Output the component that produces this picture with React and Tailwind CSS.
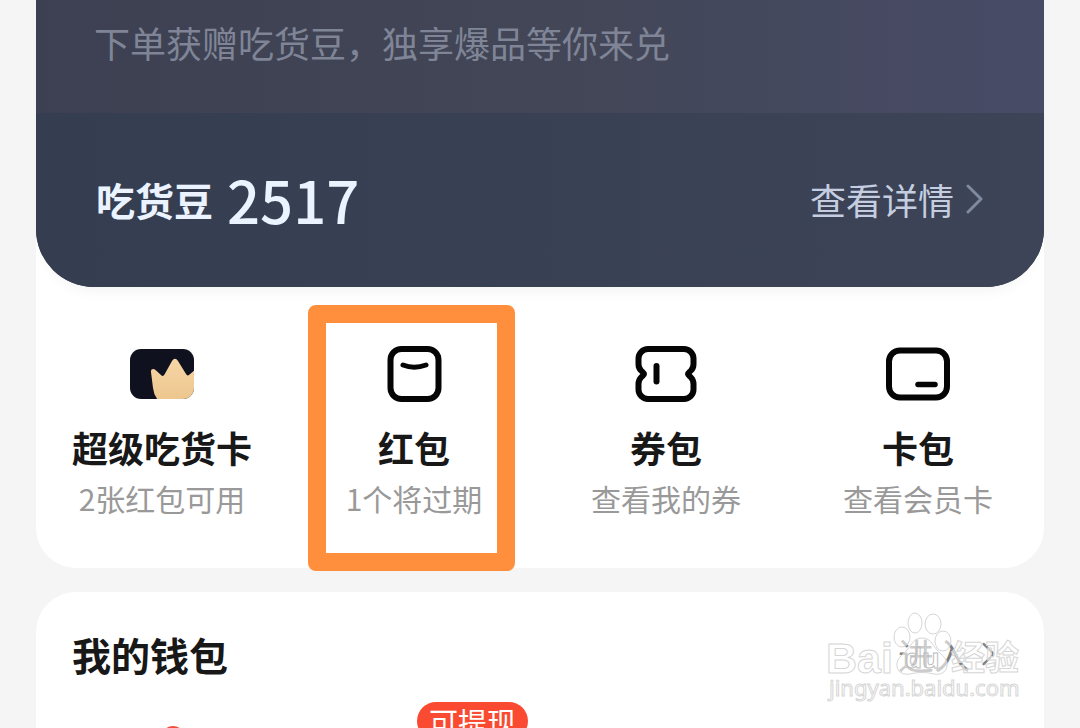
import React from 'react';
import clsx from 'clsx';

const CardIcon = () => (
  <svg width="64" height="56" viewBox="0 0 64 56" aria-hidden="true">
    <defs>
      <linearGradient id="crown" x1="0" y1="0" x2="0" y2="1">
        <stop offset="0" stopColor="#f6d6a6" />
        <stop offset="1" stopColor="#ecc58c" />
      </linearGradient>
      <clipPath id="cardShape">
        <rect y="3" width="64" height="50" rx="11" />
      </clipPath>
    </defs>
    <g clipPath="url(#cardShape)">
      <rect y="3" width="64" height="50" fill="#10111f" />
      <path
        d="M21 26C20.500 23 23.500 22 25.500 24L31 29Q33 31 34.500 28.500L42 15Q45 10.500 48 15L56 28Q57.500 30.500 59.500 28.500L66 23V56H30Q24 51 23 42Z"
        fill="url(#crown)"
      />
    </g>
  </svg>
);

const RedPacketIcon = () => (
  <svg width="64" height="56" viewBox="0 0 64 56" fill="none" stroke="#050505" aria-hidden="true">
    <rect x="8.500" y="3" width="48" height="50" rx="11" strokeWidth="6" />
    <path d="M21 19q11 4.500 23 0" strokeWidth="5" strokeLinecap="round" />
  </svg>
);

const CouponIcon = () => (
  <svg width="64" height="56" viewBox="0 0 64 56" fill="none" stroke="#050505" strokeLinecap="round" strokeLinejoin="round" aria-hidden="true">
    <path
      d="M14 3h36a9.500 9.500 0 0 1 9.500 9.500V18c0 3-.5 4.500-2.500 6.500-1.500 1.500-3 2.200-3 3.500s1.500 2 3 3.500c2 2 2.500 3.500 2.500 6.500v5.500a9.500 9.500 0 0 1-9.500 9.500H14a9.500 9.500 0 0 1-9.500-9.500V38c0-3 .5-4.500 2.500-6.500 1.500-1.500 3-2.200 3-3.500s-1.500-2-3-3.500c-2-2-2.500-3.500-2.500-6.500v-5.500A9.500 9.500 0 0 1 14 3z"
      strokeWidth="6"
    />
    <path d="M22.500 20v15.500" strokeWidth="6" />
  </svg>
);

const WalletIcon = () => (
  <svg width="64" height="56" viewBox="0 0 64 56" fill="none" stroke="#050505" aria-hidden="true">
    <rect x="3" y="4.500" width="58" height="47" rx="11" strokeWidth="6" />
    <path d="M32 38.500h17" strokeWidth="5.500" strokeLinecap="round" />
  </svg>
);

const Chevron = ({ className }) => (
  <svg viewBox="0 0 18 30" fill="none" className={className} aria-hidden="true">
    <path d="M2 2l13 13L2 28" stroke="currentColor" strokeWidth="3" strokeLinecap="round" strokeLinejoin="round" />
  </svg>
);

const Watermark = () => (
  <svg
    width="210"
    height="104"
    viewBox="0 0 210 104"
    className="absolute top-3 right-3.5 pointer-events-none"
    fill="#ffffff"
    fillOpacity="0.6"
    stroke="#d6d6d6"
    strokeWidth="1"
    fontFamily="'Noto Sans', 'Noto Sans CJK SC', sans-serif"
  >
    <text x="6" y="69" fontSize="43" fontWeight="700" fontFamily="'Liberation Sans', sans-serif">Bai</text>
    <path d="M102 34c8 0 10 6 15 12 5 5 11 9 10 16-1 7-7 9-13 8-8-2-16-2-24 0-6 1-12-1-13-8-1-7 5-11 10-16 5-6 7-12 15-12z" />
    <ellipse cx="82" cy="33" rx="8" ry="10" />
    <ellipse cx="95" cy="19" rx="7" ry="10" />
    <ellipse cx="113" cy="20" rx="8" ry="10" />
    <ellipse cx="123" cy="37" rx="8" ry="10" />
    <text x="85" y="64" fontSize="27" fontWeight="700" fill="none" stroke="#bdbdbd">du</text>
    <text x="131" y="66" fontSize="34" fontWeight="700">经验</text>
    <text x="9" y="92" fontSize="22">jingyan.baidu.com</text>
  </svg>
);

const entries = [
  { title: '超级吃货卡', note: '2张红包可用', Icon: CardIcon },
  { title: '红包', note: '1个将过期', Icon: RedPacketIcon, highlighted: true },
  { title: '券包', note: '查看我的券', Icon: CouponIcon },
  { title: '卡包', note: '查看会员卡', Icon: WalletIcon },
];

const BeanCard = () => (
  <section className="overflow-hidden rounded-b-[58px] bg-[#394154] shadow-[0_12px_16px_-10px_rgba(0,0,0,0.06)]">
    <div className="h-[113px] bg-linear-to-r from-[#3c4052] via-[#424656] to-[#484b66] px-[58px] pt-3.5">
      <p className="text-[36px] leading-[56px] text-[#7f8596]">下单获赠吃货豆，独享爆品等你来兑</p>
    </div>
    <div className="flex h-[174px] items-center justify-between bg-linear-to-r from-[#353d51] to-[#3d4457] px-[60px] pb-0.5">
      <div className="flex items-center gap-3.5 text-[#eaf3ff]">
        <h2 className="text-[39px] leading-[56px] font-bold">吃货豆</h2>
        <span className="text-[58px] leading-[60px] font-medium">2517</span>
      </div>
      <button className="flex items-center gap-3 text-[36px] leading-[56px] text-[#c5cee0]">
        查看详情
        <Chevron className="h-[30px] w-[18px] text-[#7f899f]" />
      </button>
    </div>
  </section>
);

const Entry = ({ title, note, Icon, highlighted }) => (
  <button className="relative flex flex-col items-center pt-[59px] pb-[50px]">
    <Icon />
    <span className="mt-[21px] text-[36px] leading-[48px] font-bold text-[#181818]">{title}</span>
    <span className="mt-[7px] text-[30px] leading-[40px] text-[#999999]">{note}</span>
    {highlighted && (
      <span className="absolute top-[18px] right-[25px] -bottom-[3px] left-5 rounded-lg border-[18px] border-[#ff8f3c]" />
    )}
  </button>
);

export default function App() {
  return (
    <main
      lang="zh-CN"
      className={clsx(
        'h-screen overflow-hidden bg-[#f5f5f5] px-9',
        "font-['Noto_Sans_CJK_SC','Noto_Sans',sans-serif]"
      )}
    >
      <div className="rounded-b-[40px] bg-white">
        <BeanCard />
        <nav className="grid grid-cols-4">
          {entries.map((entry) => (
            <Entry key={entry.title} {...entry} />
          ))}
        </nav>
      </div>

      <section className="relative mt-6 rounded-[40px] bg-white px-9 pt-[34px] pb-20">
        <div className="flex items-center justify-between">
          <h2 className="text-[39px] leading-[56px] font-bold text-[#181818]">我的钱包</h2>
          <button className="flex items-center gap-3 pr-3 text-[36px] leading-[56px] text-[#808080]">
            进入
            <Chevron className="h-6 w-3.5" />
          </button>
        </div>
        <div className="mt-5 flex items-start px-[89px]">
          <span className="mt-6 size-6 rounded-full bg-[#f0503c]" />
          <span className="ml-[232px] rounded-full bg-[#fa4b32] px-3 text-[29px] leading-[38px] text-white">
            可提现
          </span>
        </div>
        <Watermark />
      </section>
    </main>
  );
}
